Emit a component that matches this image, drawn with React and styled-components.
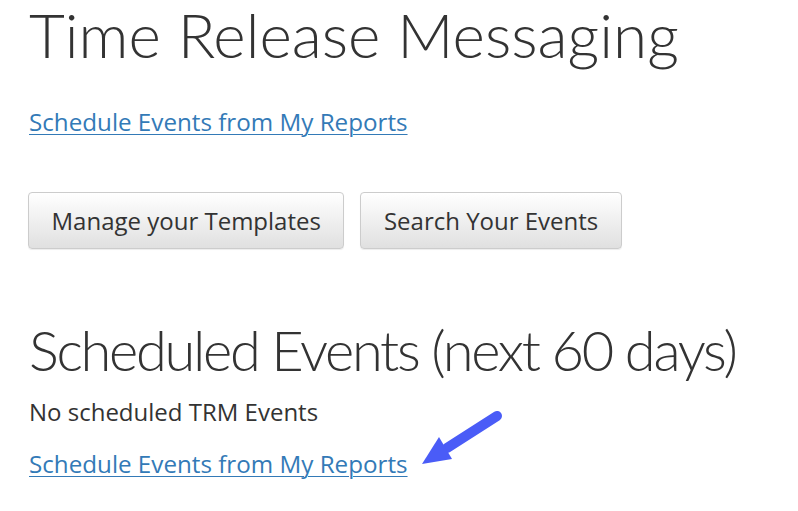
import React from "react";
import styled, { createGlobalStyle } from "styled-components";

const GlobalStyle = createGlobalStyle`
  html, body {
    margin: 0;
    padding: 0;
    background: #fff;
  }
  body {
    font-family: "Open Sans", "Liberation Sans", sans-serif;
    color: #333;
  }
`;

const Page = styled.div`
  width: 798px;
  height: 511px;
  overflow: hidden;
  padding: 0 0 0 29px;
  box-sizing: border-box;
  position: relative;
`;

const Heading = styled.h1`
  margin: ${(p) => p.$margin || "0"};
  font-family: Lato, "Open Sans", sans-serif;
  font-weight: 300;
  font-size: ${(p) => p.$size || "62px"};
  letter-spacing: ${(p) => p.$spacing || "0"};
  line-height: 1.2;
  color: #333;
  white-space: nowrap;
`;

const Link = styled.a`
  display: inline-block;
  font-size: 24.2px;
  line-height: 32px;
  color: #337ab7;
  text-decoration: underline;
  text-underline-offset: 3px;
  text-decoration-thickness: 1px;
  cursor: pointer;
`;

const Block = styled.div`
  margin: ${(p) => p.$margin || "0"};
`;

const Toolbar = styled.div`
  display: flex;
  gap: 16px;
  margin-left: -1px;
`;

const Button = styled.button`
  font-family: "Open Sans", "Liberation Sans", sans-serif;
  font-size: 24px;
  color: #333;
  height: 57px;
  padding: 0 22.5px;
  border: 1px solid #ccc;
  border-radius: 4px;
  background: linear-gradient(to bottom, #fff 0%, #e0e0e0 100%);
  box-shadow: inset 0 1px 0 rgba(255, 255, 255, 0.15), 0 1px 1px rgba(0, 0, 0, 0.075);
  cursor: pointer;
`;

const Text = styled.p`
  margin: 0;
  font-size: 24px;
  line-height: 32px;
`;

const Arrow = styled.svg`
  position: absolute;
  left: 415px;
  top: 405px;
`;

export default function App() {
  return (
    <Page>
      <GlobalStyle />
      <Heading $margin="-3px 0 0">Time Release Messaging</Heading>
      <Block $margin="35px 0 0">
        <Link>Schedule Events from My Reports</Link>
      </Block>
      <Block $margin="54px 0 0">
        <Toolbar>
          <Button>Manage your Templates</Button>
          <Button>Search Your Events</Button>
        </Toolbar>
      </Block>
      <Heading $size="56px" $spacing="-2.3px" $margin="67px 0 0">
        Scheduled Events (next 60 days)
      </Heading>
      <Block $margin="12px 0 0">
        <Text>No scheduled TRM Events</Text>
      </Block>
      <Block $margin="20px 0 0">
        <Link>Schedule Events from My Reports</Link>
      </Block>
      <Arrow width="100" height="70" viewBox="0 0 100 70">
        <line x1="82" y1="11" x2="32" y2="43" stroke="#4a5cf7" strokeWidth="10" strokeLinecap="round" />
        <polygon points="7,59 24,32 37,54" fill="#4a5cf7" />
      </Arrow>
    </Page>
  );
}
